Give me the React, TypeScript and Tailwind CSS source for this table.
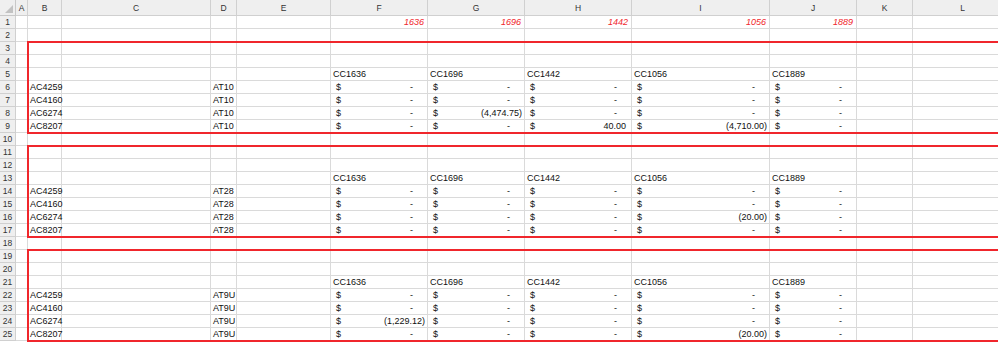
import type { ReactNode } from 'react';

/* --- Sheet data --- */
const COLS = ['A', 'B', 'C', 'D', 'E', 'F', 'G', 'H', 'I', 'J', 'K', 'L'];
const CC = ['1636', '1696', '1442', '1056', '1889'];
const ACCTS = ['AC4259', 'AC4160', 'AC6274', 'AC8207'];

const blocks = [
	{ header: 5, at: 'AT10', vals: { 'AC6274-G': '(4,474.75)', 'AC8207-H': '40.00', 'AC8207-I': '(4,710.00)' } as Record<string, string> },
	{ header: 13, at: 'AT28', vals: { 'AC6274-I': '(20.00)' } as Record<string, string> },
	{ header: 21, at: 'AT9U', vals: { 'AC6274-F': '(1,229.12)', 'AC8207-I': '(20.00)' } as Record<string, string> },
];

const Acct = ({ v }: { v: string }) => (
	<div className="flex justify-between pl-[5px]">
		<span>$</span>
		<span className={v === '-' ? 'pr-[14px]' : v.startsWith('(') ? 'pr-[2px]' : 'pr-[5px]'}>{v}</span>
	</div>
);

const buildRows = () => {
	const rows: Record<number, Record<string, ReactNode>> = {};
	rows[1] = {};
	CC.forEach((c, i) => {
		rows[1][COLS[5 + i]] = <div className="text-right pr-[3px] italic text-[#f0262c]">{c}</div>;
	});
	blocks.forEach(b => {
		rows[b.header] = {};
		CC.forEach((c, i) => {
			rows[b.header][COLS[5 + i]] = <div className="pl-[2px]">CC{c}</div>;
		});
		ACCTS.forEach((a, r) => {
			const row: Record<string, ReactNode> = {
				B: <div className="pl-[2px]">{a}</div>,
				D: <div className="pl-[2px]">{b.at}</div>,
			};
			CC.forEach((_, i) => {
				const col = COLS[5 + i];
				row[col] = <Acct v={b.vals[`${a}-${col}`] ?? '-'} />;
			});
			rows[b.header + 1 + r] = row;
		});
	});
	return rows;
};

/* --- App --- */
export default function App() {
	const rows = buildRows();
	const grid = 'grid grid-cols-[16px_12px_34px_149px_26px_94px_97px_97px_107px_138px_87px_56px_100px]';

	return (
		<div className="w-[998px] h-[343px] overflow-hidden bg-white font-['Liberation_Sans',Arial,sans-serif] text-[9px] text-[#111] leading-[12px]">
			<div className="relative w-[1013px]">
				{/* column headers */}
				<div className={`${grid} h-[16px] bg-[#efefef]`}>
					<div className="relative border-r border-b border-[#c8c8c8]">
						<svg className="absolute right-[2px] bottom-[2px]" width="8" height="8" viewBox="0 0 8 8">
							<path d="M8 0 L8 8 L0 8 Z" fill="#c2c2c2" />
						</svg>
					</div>
					{COLS.map(c => (
						<div key={c} className="flex items-center justify-center border-r border-b border-[#d0d0d0] text-[8.5px] text-[#333]">
							{c}
						</div>
					))}
				</div>

				{/* body rows */}
				{Array.from({ length: 25 }, (_, i) => i + 1).map(r => (
					<div key={r} className={`${grid} h-[13px]`}>
						<div className="flex items-center justify-center bg-[#efefef] border-r border-b border-[#d0d0d0] text-[8.5px] text-[#333]">
							{r}
						</div>
						{COLS.map(c => (
							<div key={c} className="border-r border-b border-[#dadada] whitespace-nowrap">
								{rows[r]?.[c]}
							</div>
						))}
					</div>
				))}

				{/* red outlines drawn over the cells */}
				<div className="absolute left-[27px] top-[41px] w-[1000px] h-[93px] border-2 border-[#f0262c]" />
				<div className="absolute left-[27px] top-[145px] w-[1000px] h-[93px] border-2 border-[#f0262c]" />
				<div className="absolute left-[27px] top-[249px] w-[1000px] h-[93px] border-2 border-[#f0262c]" />
			</div>
		</div>
	);
}
